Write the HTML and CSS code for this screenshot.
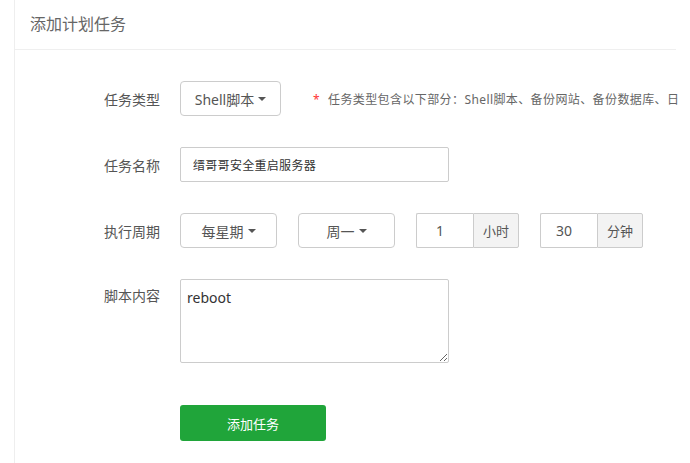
FILE: index.html
```html
<!DOCTYPE html>
<html lang="zh-CN">
<head>
<meta charset="utf-8">
<title>添加计划任务</title>
<link rel="stylesheet" href="styles.css">
</head>
<body>
<div class="panel">
  <div class="panel-head">添加计划任务</div>
  <div class="panel-body">
    <div class="line">
      <span class="tname">任务类型</span>
      <div class="info">
        <button class="dropdown w100" type="button">Shell脚本<span class="caret"></span></button>
        <span class="tip"><span class="star">*</span>任务类型包含以下部分：Shell脚本、备份网站、备份数据库、日</span>
      </div>
    </div>
    <div class="line">
      <span class="tname">任务名称</span>
      <div class="info">
        <input class="text-input" type="text" value="缙哥哥安全重启服务器">
      </div>
    </div>
    <div class="line">
      <span class="tname">执行周期</span>
      <div class="info">
        <button class="dropdown w96" type="button">每星期<span class="caret"></span></button>
        <button class="dropdown w96" type="button">周一<span class="caret"></span></button>
        <div class="input-group">
          <input class="num" type="text" value="1">
          <span class="addon">小时</span>
        </div>
        <div class="input-group">
          <input class="num" type="text" value="30">
          <span class="addon">分钟</span>
        </div>
      </div>
    </div>
    <div class="line line-top">
      <span class="tname">脚本内容</span>
      <div class="info">
        <textarea class="script">reboot</textarea>
      </div>
    </div>
    <div class="line line-btn">
      <span class="tname"></span>
      <div class="info">
        <button class="btn-green" type="button">添加任务</button>
      </div>
    </div>
  </div>
</div>
</body>
</html>
```

FILE: styles.css
```css
html, body {
  margin: 0;
  padding: 0;
  background: #fff;
  overflow: hidden;
  font-family: "Noto Sans", "Noto Sans CJK SC", sans-serif;
  color: #555;
}

.panel {
  margin: 0 14px;
  border-left: 1px solid #eeeeee;
  min-height: 463px;
}

.panel-head {
  height: 49px;
  line-height: 49px;
  padding: 0 15px;
  font-size: 16px;
  color: #666;
  border-bottom: 1px solid #efefef;
}

.panel-body {
  padding-top: 31px;
}

.line {
  display: flex;
  align-items: center;
  margin-bottom: 31px;
  height: 35px;
}

.line-top {
  align-items: flex-start;
  height: auto;
  margin-bottom: 42px;
}

.line-top .tname {
  line-height: 34px;
}

.tname {
  width: 145px;
  margin-right: 20px;
  flex-shrink: 0;
  text-align: right;
  font-size: 14px;
  color: #555;
}

.info {
  display: flex;
  align-items: center;
  white-space: nowrap;
}

.dropdown {
  height: 35px;
  box-sizing: border-box;
  border: 1px solid #ccc;
  border-radius: 4px;
  background: #fff;
  color: #555;
  font-family: inherit;
  font-size: 14px;
  padding: 0 8px;
  display: flex;
  align-items: center;
  justify-content: center;
  margin-right: 21px;
}

.w100 { width: 101px; }
.w96 { width: 97px; }

.caret {
  display: inline-block;
  width: 0;
  height: 0;
  margin-left: 4px;
  border-top: 4px solid #555;
  border-left: 4px solid transparent;
  border-right: 4px solid transparent;
}

.tip {
  margin-left: 11px;
  font-size: 12px;
  letter-spacing: 0.4px;
  color: #666;
}

.star {
  color: #f33;
  margin-right: 8px;
}

.text-input {
  width: 269px;
  height: 35px;
  box-sizing: border-box;
  border: 1px solid #ccc;
  border-radius: 2px;
  padding: 0 12px;
  font-family: inherit;
  font-size: 12px;
  letter-spacing: 0.3px;
  color: #333;
  outline: none;
}

.input-group {
  display: flex;
  height: 35px;
  margin-right: 21px;
}

.num {
  width: 57px;
  box-sizing: border-box;
  height: 35px;
  border: 1px solid #ccc;
  border-right: none;
  border-radius: 2px 0 0 2px;
  text-align: center;
  padding: 0 10px 0 0;
  font-family: inherit;
  font-size: 14px;
  color: #555;
  outline: none;
}

.addon {
  width: 46px;
  box-sizing: border-box;
  border: 1px solid #ccc;
  border-radius: 0 2px 2px 0;
  background: #f3f3f3;
  font-size: 13px;
  color: #555;
  display: flex;
  align-items: center;
  justify-content: center;
}

.script {
  width: 269px;
  height: 84px;
  box-sizing: border-box;
  border: 1px solid #ccc;
  border-radius: 2px;
  padding: 8px 6px;
  font-family: inherit;
  font-size: 14px;
  line-height: 20px;
  color: #333;
  resize: both;
  outline: none;
  display: block;
}

.line-btn {
  height: 36px;
}

.btn-green {
  width: 146px;
  height: 36px;
  border: none;
  border-radius: 3px;
  background: #20a53a;
  color: #fff;
  font-family: inherit;
  font-size: 13px;
}
```
